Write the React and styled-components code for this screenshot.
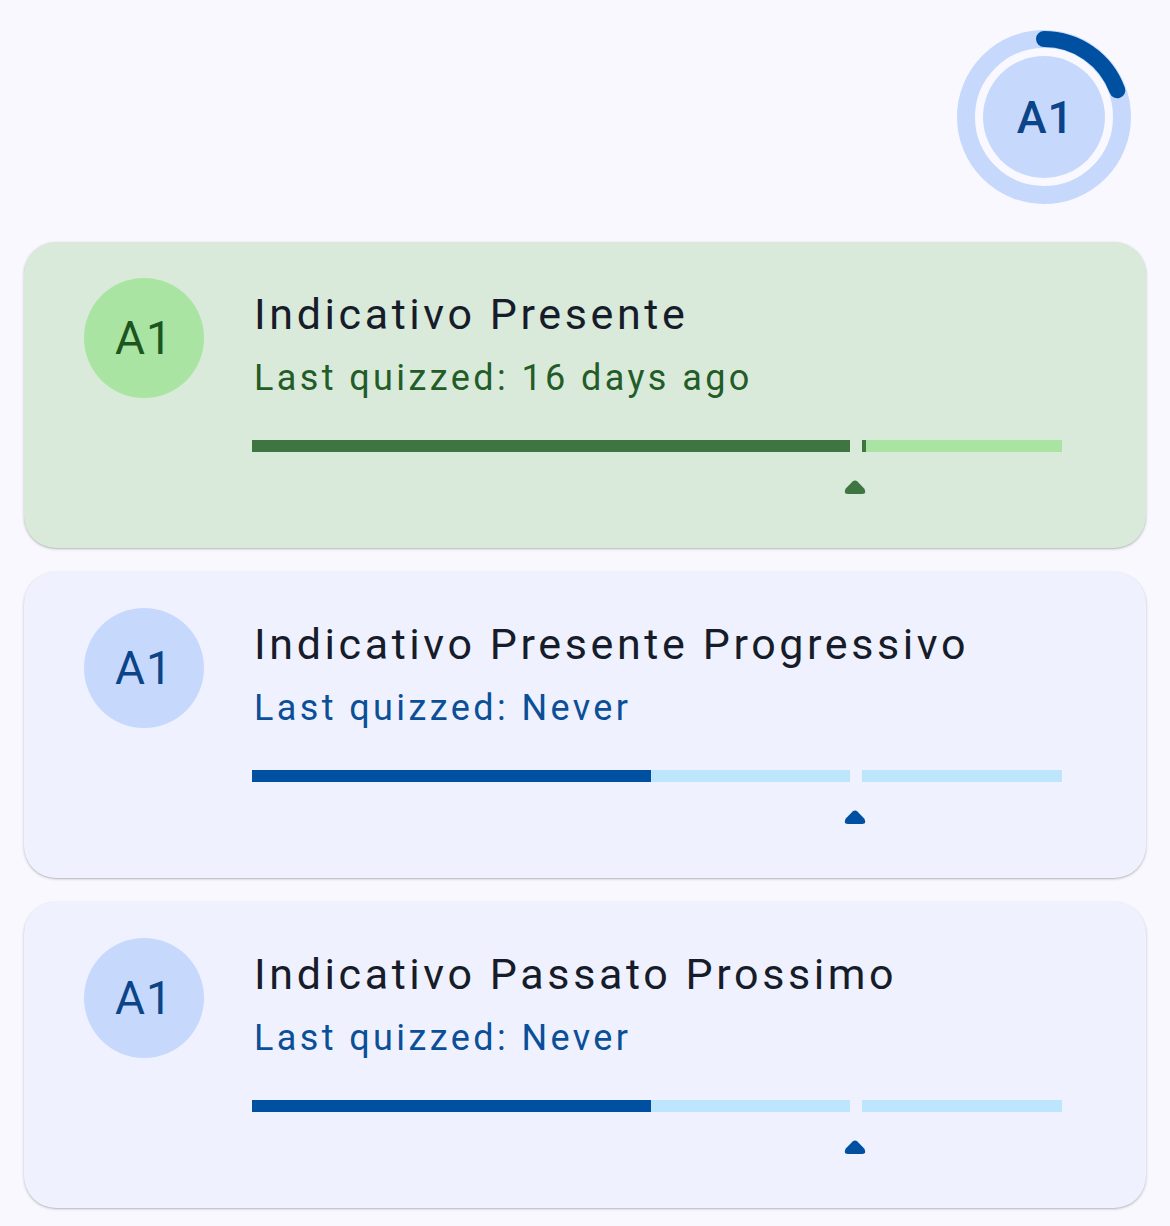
import React from "react";
import styled, { createGlobalStyle } from "styled-components";

const Global = createGlobalStyle`
  html, body { margin: 0; padding: 0; background: #f8f8fe; }
  body { font-family: Roboto, "Noto Sans", sans-serif; }
`;

const themes = {
  green: {
    card: "#d9eadb",
    avatar: "#a9e4a3",
    avatarText: "#1c5520",
    sub: "#235c26",
    dark: "#3e7541",
    light: "#a9e4a3",
  },
  blue: {
    card: "#eff2fe",
    avatar: "#c6d9fc",
    avatarText: "#0b4488",
    sub: "#0b4f98",
    dark: "#0050a2",
    light: "#bde6fd",
  },
};

const Page = styled.div`
  width: 1170px;
  min-height: 1226px;
  box-sizing: border-box;
  padding: 30px 24px 18px;
  display: flex;
  flex-direction: column;
`;

const Header = styled.div`
  display: flex;
  justify-content: flex-end;
  padding-right: 15px;
  margin-bottom: 38px;
`;

const Badge = styled.div`
  position: relative;
  width: 174px;
  height: 174px;
`;

const BadgeLabel = styled.div`
  position: absolute;
  inset: 0;
  padding-left: 3px;
  display: flex;
  align-items: center;
  justify-content: center;
  font-size: 45px;
  font-weight: 500;
  color: #0b4488;
  letter-spacing: 1px;
`;

const List = styled.div`
  display: flex;
  flex-direction: column;
  gap: 24px;
`;

const Card = styled.div`
  background: ${(p) => themes[p.$tone].card};
  border-radius: 32px;
  height: 306px;
  box-sizing: border-box;
  padding: 36px 84px 0 60px;
  display: flex;
  gap: 50px;
  box-shadow: 0 1px 3px rgba(0, 0, 0, 0.22), 0 1px 1px rgba(0, 0, 0, 0.08);
`;

const Avatar = styled.div`
  flex: none;
  width: 120px;
  height: 120px;
  border-radius: 50%;
  background: ${(p) => themes[p.$tone].avatar};
  color: ${(p) => themes[p.$tone].avatarText};
  display: flex;
  align-items: center;
  justify-content: center;
  font-size: 46px;
  font-weight: 400;
  letter-spacing: 1px;
`;

const Body = styled.div`
  flex: 1;
  display: flex;
  flex-direction: column;
`;

const Title = styled.div`
  font-size: 43px;
  line-height: 54px;
  color: #171c2a;
  letter-spacing: 3.6px;
  margin-top: 9px;
  white-space: nowrap;
`;

const Sub = styled.div`
  font-size: 36px;
  line-height: 46px;
  color: ${(p) => themes[p.$tone].sub};
  letter-spacing: 3.4px;
  margin-top: 14px;
  white-space: nowrap;
`;

const BarRow = styled.div`
  margin-top: 39px;
  margin-left: -2px;
  display: flex;
  gap: 12px;
  height: 12px;
`;

const Segment = styled.div`
  height: 12px;
  flex: ${(p) => p.$grow};
  background: ${(p) => themes[p.$tone].light};
  position: relative;
  overflow: hidden;
`;

const Fill = styled.div`
  height: 100%;
  background: ${(p) => themes[p.$tone].dark};
`;

const MarkerRow = styled.div`
  margin-top: 28px;
  margin-left: -2px;
  display: flex;
  height: 16px;
`;

const Marker = styled.svg`
  margin-left: 592px;
  color: ${(p) => themes[p.$tone].dark};
`;

function ProgressBar({ tone, first, second }) {
  return (
    <BarRow>
      <Segment $tone={tone} $grow={598}>
        <Fill $tone={tone} style={{ width: `${first * 100}%` }} />
      </Segment>
      <Segment $tone={tone} $grow={200}>
        <Fill $tone={tone} style={{ width: `${second * 100}%` }} />
      </Segment>
    </BarRow>
  );
}

function Level({ tone, title, sub, first, second }) {
  return (
    <Card $tone={tone}>
      <Avatar $tone={tone}>A1</Avatar>
      <Body>
        <Title>{title}</Title>
        <Sub $tone={tone}>{sub}</Sub>
        <ProgressBar tone={tone} first={first} second={second} />
        <MarkerRow>
          <Marker $tone={tone} width="22" height="15" viewBox="0 0 22 15">
            <path
              d="M8.6 1.6 Q11 -0.6 13.4 1.6 L20.2 8.6 Q23 13.8 18 14 L4 14 Q-1 13.8 1.8 8.6 Z"
              fill="currentColor"
            />
          </Marker>
        </MarkerRow>
      </Body>
    </Card>
  );
}

function LevelBadge() {
  const r = 78;
  const c = 87;
  const angle = 70;
  const rad = (angle * Math.PI) / 180;
  const ex = c + r * Math.sin(rad);
  const ey = c - r * Math.cos(rad);
  return (
    <Badge>
      <svg width="174" height="174" viewBox="0 0 174 174">
        <circle cx={c} cy={c} r={r} fill="none" stroke="#c6d9fc" strokeWidth="18" />
        <circle cx={c} cy={c} r="61" fill="#c6d9fc" />
        <path
          d={`M ${c} ${c - r} A ${r} ${r} 0 0 1 ${ex} ${ey}`}
          fill="none"
          stroke="#0050a2"
          strokeWidth="16"
          strokeLinecap="round"
        />
      </svg>
      <BadgeLabel>A1</BadgeLabel>
    </Badge>
  );
}

export default function App() {
  return (
    <>
      <Global />
      <Page>
        <Header>
          <LevelBadge />
        </Header>
        <List>
          <Level
            tone="green"
            title="Indicativo Presente"
            sub="Last quizzed: 16 days ago"
            first={1}
            second={0.02}
          />
          <Level
            tone="blue"
            title="Indicativo Presente Progressivo"
            sub="Last quizzed: Never"
            first={0.667}
            second={0}
          />
          <Level
            tone="blue"
            title="Indicativo Passato Prossimo"
            sub="Last quizzed: Never"
            first={0.667}
            second={0}
          />
        </List>
      </Page>
    </>
  );
}
